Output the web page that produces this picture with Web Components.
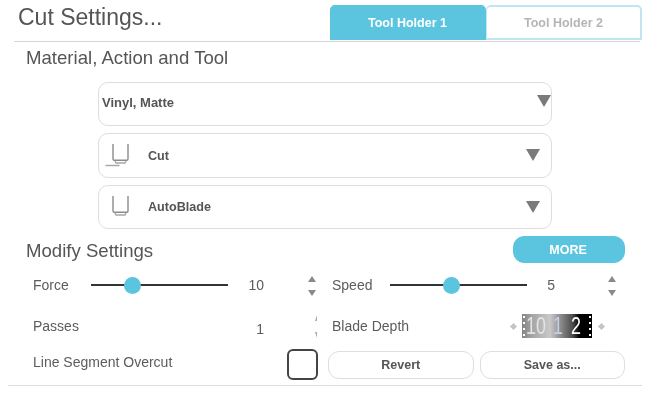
<!DOCTYPE html>
<html lang="en"><head><meta charset="utf-8"><title>Cut Settings</title>
<style>
html,body{margin:0;background:#fff}
body{width:648px;height:400px;overflow:hidden;font-family:"Liberation Sans",Arial,sans-serif;color:#555;filter:blur(.45px)}
</style></head><body>
<cut-panel>
  <cut-header slot="header" title-text="Cut Settings...">
    <tool-tab active>Tool Holder 1</tool-tab>
    <tool-tab>Tool Holder 2</tool-tab>
  </cut-header>
  <section-heading>Material, Action and Tool</section-heading>
  <select-stack>
    <tool-select variant="plain">Vinyl, Matte</tool-select>
    <tool-select icon="cut">Cut</tool-select>
    <tool-select icon="blade">AutoBlade</tool-select>
  </select-stack>
  <modify-head><section-heading tight>Modify Settings</section-heading><pill-button primary>MORE</pill-button></modify-head>
  <settings-grid>
    <setting-row label="Force" slider value="10" thumb="41" value-pad="42" end="14"><step-arrows></step-arrows></setting-row>
    <setting-row label="Speed" slider value="5" thumb="61" value-pad="51" end="7"><step-arrows></step-arrows></setting-row>
    <setting-row label="Passes" value="1" value-pad="42" end="14" low><step-arrows faint></step-arrows></setting-row>
    <setting-row label="Blade Depth"><blade-picker></blade-picker></setting-row>
    <overcut-row></overcut-row>
    <action-row><pill-button>Revert</pill-button><pill-button>Save as...</pill-button></action-row>
  </settings-grid>
</cut-panel>
<script>
function def(name, css, html){
  customElements.define(name, class extends HTMLElement{
    connectedCallback(){
      if(this.shadowRoot) return;
      const r=this.attachShadow({mode:'open'});
      r.innerHTML='<style>'+css+'</style>'+(typeof html==='function'?html(this):html);
    }
  });
}
def('cut-panel',':host{display:block;width:648px;height:400px;box-sizing:border-box}','<slot name="header"></slot><slot></slot>');
def('cut-header',`:host{display:flex;justify-content:space-between;align-items:flex-end;box-sizing:border-box;height:42px;margin-left:14px;width:626px;border-bottom:1px solid #d6d6d6}
h1{margin:0;align-self:flex-start;padding:3px 0 0 4px;font:400 23px/28px "Liberation Sans",Arial,sans-serif;color:#555}
.tabs{display:flex;margin-right:-2px;height:35px;margin-bottom:1px}`,
 h=>`<h1>${h.getAttribute('title-text')}</h1><div class="tabs"><slot></slot></div>`);
def('tool-tab',`:host{display:flex;align-items:center;justify-content:center;box-sizing:border-box;width:156px;height:35px;border:2px solid #bfe6f1;border-left-width:1px;border-radius:5px 5px 0 0;font:700 12.5px "Liberation Sans",Arial,sans-serif;color:#b5b5b5;background:#fff}
:host([active]){background:#5bc5e0;border-color:#5bc5e0;color:#fff}`,'<slot></slot>');
def('section-heading',`:host{display:block;box-sizing:border-box;height:32px;padding-left:26px;font:400 18.6px/32px "Liberation Sans",Arial,sans-serif;color:#555}
:host([tight]){height:27px;line-height:30px}`,'<slot></slot>');
def('select-stack',':host{display:flex;flex-direction:column;gap:7px;margin:7.5px 0 0 98px;width:454px}','<slot></slot>');
def('tool-select',`:host{display:flex;align-items:center;box-sizing:border-box;height:44.5px;border:1.5px solid #dedede;border-radius:10px;background:#fff;padding-left:13px;font:700 12.6px "Liberation Sans",Arial,sans-serif;color:#555}
:host([variant=plain]){padding-left:3px;font-size:13px;padding-bottom:3px}
.ic{width:26px;height:26px;flex:none;margin:0 18px 0 -8px}
.label{flex:1;padding-top:1px}
.arrow{flex:none;width:0;height:0;border-left:7.5px solid transparent;border-right:7.5px solid transparent;border-top:12px solid #7b7b7b;margin-right:11px}
:host([variant=plain]) .arrow{margin-right:0;margin-top:-2px}`,
 h=>{
  const i=h.getAttribute('icon');
  const u='<path d="M9 2v15c0 .8.5 1.300 1.300 1.300h12.400c.8 0 1.300-.5 1.300-1.300V2"/><path d="M11 19l1 2h9l1-2" stroke="#a8a8a8"/>';
  const ic=i==='cut'
   ?`<svg class="ic" viewBox="0 0 26 26" fill="none" stroke="#8b8b8b" stroke-width="1.4">${u}<path d="M1.500 23.500h14" stroke="#a5a5a5"/></svg>`
   :i?`<svg class="ic" viewBox="0 0 26 26" fill="none" stroke="#8b8b8b" stroke-width="1.4">${u}</svg>`:'';
  return `${ic}<span class="label"><slot></slot></span><span class="arrow"></span>`;
 });
def('modify-head',':host{display:flex;justify-content:space-between;align-items:flex-start;margin-top:7px;width:625px;height:27px}','<slot></slot>');
def('pill-button',`:host{display:flex;align-items:center;justify-content:center;box-sizing:border-box;height:28px;flex:1;border:1.5px solid #dedede;border-radius:11px;background:#fff;font:700 12.5px "Liberation Sans",Arial,sans-serif;color:#555}
:host([primary]){flex:none;width:112px;height:27px;background:#5bc5e0;border-color:#5bc5e0;color:#fff;font-size:12.5px;padding-right:2px}`,'<slot></slot>');
def('settings-grid',`:host{display:grid;grid-template-columns:299px 1fr;grid-template-rows:41px 41px 36px;align-items:center;box-sizing:border-box;width:634px;margin:1.5px 0 0 8px;padding:0 17px 2.5px 25px;height:121.5px;border-bottom:1px solid #dcdcdc}`,'<slot></slot>');
def('setting-row',`:host{display:grid;grid-template-columns:58px 137px 1fr 12px;align-items:center;font:400 14px "Liberation Sans",Arial,sans-serif;color:#5c5c5c;height:30px}
.track{position:relative;height:2px;background:#333}
.thumb{position:absolute;top:-7.500px;width:17px;height:17px;border-radius:50%;background:#5bc5e0;margin-left:-8.500px}
.val{text-align:right;font-size:14px}
:host([low]) .val{position:relative;top:3px}
:host(:not([value])){grid-template-columns:auto 1fr}`,
 h=>{
  const v=h.getAttribute('value');
  if(v===null) return `<span>${h.getAttribute('label')}</span><slot></slot>`;
  h.style.paddingRight=(h.getAttribute('end')||0)+'px';
  const tr=h.hasAttribute('slider')?`<div class="track"><div class="thumb" style="left:${h.getAttribute('thumb')}px"></div></div>`:'<span></span>';
  return `<span>${h.getAttribute('label')}</span>${tr}<span class="val" style="padding-right:${h.getAttribute('value-pad')}px">${v}</span><slot></slot>`;
 });
def('step-arrows',`:host{display:flex;flex-direction:column;align-items:center;gap:8px;margin-top:2px}
i{width:0;height:0;border-left:4px solid transparent;border-right:4px solid transparent}
.u{border-bottom:6px solid #8a8a8a}.d{border-top:6px solid #8a8a8a}
:host([faint]){gap:11px;align-items:flex-end;padding-right:1px;margin-top:1px}
:host([faint]) i{border-left-width:2px;border-right-width:0;border-bottom-width:6px;border-top-width:6px;border-bottom-color:#aaa;border-top-color:#aaa}`,'<i class="u"></i><i class="d"></i>');
def('blade-picker',`:host{display:flex;align-items:center;justify-content:flex-end;gap:6.5px;padding-right:21.5px}
.side{width:5px;height:5px;background:#c4c4c4;transform:rotate(45deg);flex:none}
.dial{display:flex;align-items:center;width:70px;height:24px;box-sizing:border-box;overflow:hidden;background:linear-gradient(90deg,#858585 0,#a5a5a5 15%,#c9c9c9 40%,#8c8c8c 55%,#4d4d4d 72%,#000 82%,#000 100%);font:400 23px/24px "Liberation Sans",sans-serif;white-space:nowrap;position:relative}
.dial span{display:inline-block;transform:scaleX(.78);transform-origin:left center;width:0}
.a{color:#e4e4e4}.b{color:#c3d0e6}.c{color:#fff}
.dots{position:absolute;top:2px;bottom:2px;width:2px;background:repeating-linear-gradient(#fff 0 2px,transparent 2px 6px)}`,
 `<i class="side"></i><div class="dial"><i class="dots" style="left:1px"></i><span class="a" style="margin-left:4px">10</span><span class="b" style="margin-left:27px">1</span><span class="c" style="margin-left:18px">2</span><i class="dots" style="right:1px"></i></div><i class="side"></i>`);
def('overcut-row',`:host{display:flex;align-items:center;justify-content:space-between;font:400 14px "Liberation Sans",Arial,sans-serif;color:#5c5c5c;padding-right:14px;box-sizing:border-box}
span{padding-bottom:5px}
.box{box-sizing:border-box;width:31px;height:31px;border:2px solid #444;border-radius:6px;background:#fff}`,'<span>Line Segment Overcut</span><div class="box"></div>');
def('action-row',`:host{display:flex;gap:6px;margin-left:-4px}`,'<slot></slot>');
</script>
</body></html>
